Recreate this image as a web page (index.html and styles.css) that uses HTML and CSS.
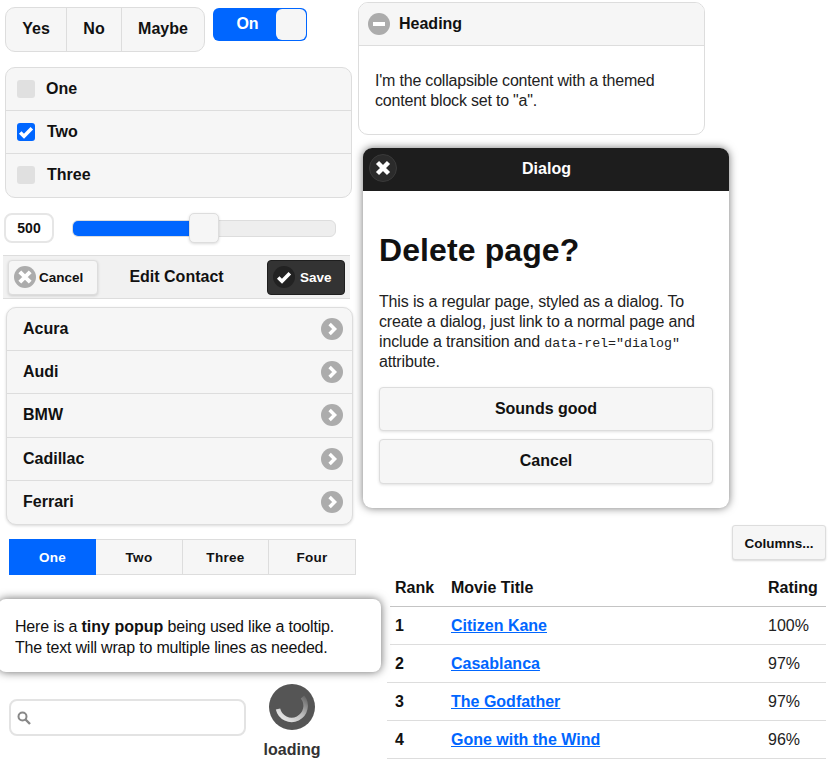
FILE: index.html
```html
<!DOCTYPE html>
<html lang="en">
<head>
  <meta charset="UTF-8">
  <title>Widgets</title>
  <link rel="stylesheet" href="styles.css">
</head>
<body>
  <div class="page">
    <div class="left-col">
      <div class="top-row">
        <div class="radio-group">
          <span class="radio-item yes">Yes</span>
          <span class="radio-item no">No</span>
          <span class="radio-item maybe">Maybe</span>
        </div>
        <div class="flip">
          <span class="flip-label">On</span>
          <span class="flip-knob"></span>
        </div>
      </div>

      <div class="check-list">
        <div class="check-row"><span class="check-box"></span><span class="check-one">One</span></div>
        <div class="check-row">
          <span class="check-box checked">
            <svg width="18" height="18" viewBox="0 0 18 18"><path d="M3.2 9.5 L7 13.2 L14.8 5.2" fill="none" stroke="#fff" stroke-width="3.6"/></svg>
          </span>
          <span>Two</span>
        </div>
        <div class="check-row"><span class="check-box"></span><span>Three</span></div>
      </div>

      <div class="slider-row">
        <div class="slider-value">500</div>
        <div class="slider-track">
          <div class="slider-fill"></div>
          <div class="slider-handle"></div>
        </div>
      </div>

      <div class="edit-bar">
        <div class="bar-btn cancel-btn">
          <span class="icon-circle">
            <svg width="22" height="22" viewBox="0 0 22 22"><path d="M5.8 5.8 L16.2 16.2 M16.2 5.8 L5.8 16.2" stroke="#fff" stroke-width="4"/></svg>
          </span>
          Cancel
        </div>
        <div class="bar-title">Edit Contact</div>
        <div class="bar-btn save-btn">
          <span class="icon-circle dark">
            <svg width="22" height="22" viewBox="0 0 22 22"><path d="M5.2 11.5 L9 15.2 L16.8 7.2" fill="none" stroke="#fff" stroke-width="3.6"/></svg>
          </span>
          Save
        </div>
      </div>

      <ul class="car-list">
        <li>Acura<span class="icon-circle"><svg width="22" height="22" viewBox="0 0 22 22"><path d="M8.6 6 L13.6 11 L8.6 16" fill="none" stroke="#fff" stroke-width="3.4"/></svg></span></li>
        <li>Audi<span class="icon-circle"><svg width="22" height="22" viewBox="0 0 22 22"><path d="M8.6 6 L13.6 11 L8.6 16" fill="none" stroke="#fff" stroke-width="3.4"/></svg></span></li>
        <li>BMW<span class="icon-circle"><svg width="22" height="22" viewBox="0 0 22 22"><path d="M8.6 6 L13.6 11 L8.6 16" fill="none" stroke="#fff" stroke-width="3.4"/></svg></span></li>
        <li>Cadillac<span class="icon-circle"><svg width="22" height="22" viewBox="0 0 22 22"><path d="M8.6 6 L13.6 11 L8.6 16" fill="none" stroke="#fff" stroke-width="3.4"/></svg></span></li>
        <li>Ferrari<span class="icon-circle"><svg width="22" height="22" viewBox="0 0 22 22"><path d="M8.6 6 L13.6 11 L8.6 16" fill="none" stroke="#fff" stroke-width="3.4"/></svg></span></li>
      </ul>

      <div class="navbar">
        <span class="nav-item active">One</span>
        <span class="nav-item two">Two</span>
        <span class="nav-item three">Three</span>
        <span class="nav-item">Four</span>
      </div>

      <div class="popup-wrap">
        <div class="popup">Here is a <strong>tiny popup</strong> being used like a tooltip.<br>The text will wrap to multiple lines as needed.</div>
      </div>

      <div class="bottom-row">
        <div class="search-box">
          <svg width="14" height="14" viewBox="0 0 14 14"><circle cx="5.5" cy="5.5" r="4" fill="none" stroke="#888" stroke-width="2"/><path d="M8.5 8.5 L13 13" stroke="#888" stroke-width="2.4"/></svg>
        </div>
        <div class="loader">
          <div class="loader-disc">
            <svg width="46" height="46" viewBox="0 0 46 46">
              <defs>
                <linearGradient id="spin" x1="0" y1="1" x2="1" y2="0">
                  <stop offset="0" stop-color="#eee"/>
                  <stop offset="0.55" stop-color="#bbb"/>
                  <stop offset="1" stop-color="#666"/>
                </linearGradient>
              </defs>
              <path d="M33.5 13 A14 14 0 1 1 9 25" fill="none" stroke="url(#spin)" stroke-width="4.5"/>
            </svg>
          </div>
          <div class="loader-text">loading</div>
        </div>
      </div>
    </div>

    <div class="right-col">
      <div class="collapsible">
        <div class="coll-head">
          <span class="icon-circle">
            <svg width="22" height="22" viewBox="0 0 22 22"><path d="M5 11 H17" stroke="#fff" stroke-width="4"/></svg>
          </span>
          Heading
        </div>
        <div class="coll-body">I'm the collapsible content with a themed content block set to "a".</div>
      </div>

      <div class="dialog">
        <div class="dialog-head">
          <span class="dialog-close">
            <svg width="28" height="28" viewBox="0 0 28 28"><path d="M8.5 8.5 L19.5 19.5 M19.5 8.5 L8.5 19.5" stroke="#fff" stroke-width="4.4"/></svg>
          </span>
          Dialog
        </div>
        <div class="dialog-body">
          <h1>Delete page?</h1>
          <p>This is a regular page, styled as a dialog. To create a dialog, just link to a normal page and include a transition and <code>data-rel="dialog"</code> attribute.</p>
          <div class="big-btn">Sounds good</div>
          <div class="big-btn last">Cancel</div>
        </div>
      </div>

      <div class="columns-row"><div class="columns-btn">Columns...</div></div>

      <table class="movies">
        <thead>
          <tr><th class="col-rank">Rank</th><th class="col-title">Movie Title</th><th>Rating</th></tr>
        </thead>
        <tbody>
          <tr><th>1</th><td><a href="#">Citizen Kane</a></td><td>100%</td></tr>
          <tr><th>2</th><td><a href="#">Casablanca</a></td><td>97%</td></tr>
          <tr><th>3</th><td><a href="#">The Godfather</a></td><td>97%</td></tr>
          <tr><th>4</th><td><a href="#">Gone with the Wind</a></td><td>96%</td></tr>
        </tbody>
      </table>
    </div>
  </div>
</body>
</html>
```

FILE: styles.css
```css
* {
  box-sizing: border-box;
}
html, body {
  height: 100%;
}
body {
  margin: 0;
  overflow: hidden;
  background: #fff;
  color: #111;
  font-family: "Liberation Sans", Arial, sans-serif;
  font-size: 16px;
}
.page {
  display: flex;
  align-items: flex-start;
}
.left-col {
  width: 358px;
  flex: none;
  font-weight: bold;
}
.right-col {
  width: 468px;
  flex: none;
}

.icon-circle {
  width: 22px;
  height: 22px;
  flex: none;
  border-radius: 50%;
  background: #acacac;
  display: block;
}
.icon-circle svg {
  display: block;
}
.icon-circle.dark {
  background: #222;
}

/* radio group + flip */
.top-row {
  display: flex;
  align-items: flex-start;
  height: 52px;
  padding: 7px 0 0 5px;
}
.radio-group {
  display: flex;
  width: 200px;
  height: 45px;
  background: #f6f6f6;
  border: 1px solid #ddd;
  border-radius: 10px;
}
.radio-item {
  display: flex;
  align-items: center;
  justify-content: center;
  padding-bottom: 1px;
  border-right: 1px solid #ddd;
}
.radio-item.yes { width: 61px; }
.radio-item.no { width: 55px; }
.radio-item.maybe { flex: 1; border-right: none; }
.flip {
  display: flex;
  align-items: center;
  width: 94px;
  height: 33px;
  margin: 1px 0 0 8px;
  background: #06f;
  border-radius: 6px;
  color: #fff;
}
.flip-label {
  flex: 1;
  text-align: center;
  padding: 0 0 2px 6px;
}
.flip-knob {
  width: 30px;
  height: 31px;
  margin-right: 1px;
  background: #f6f6f6;
  border-radius: 6px;
}

/* checkboxes */
.check-list {
  width: 347px;
  height: 131px;
  margin: 15px 0 0 5px;
  background: #f6f6f6;
  border: 1px solid #ddd;
  border-radius: 10px;
}
.check-row {
  display: flex;
  align-items: center;
  gap: 12px;
  height: 43px;
  padding-left: 11px;
  border-bottom: 1px solid #ddd;
}
.check-row:last-child {
  padding-bottom: 2px;
  border-bottom: none;
}
.check-one {
  margin-left: -1px;
}
.check-box {
  width: 18px;
  height: 18px;
  background: #e0e0e0;
  border-radius: 3px;
}
.check-box.checked {
  background: #06f;
}
.check-box svg {
  display: block;
}

/* slider */
.slider-row {
  display: flex;
  align-items: center;
  height: 32px;
  margin: 14px 0 0 4px;
}
.slider-value {
  width: 50px;
  height: 30px;
  border: 2px solid #e6e6e6;
  border-radius: 8px;
  font-size: 14px;
  line-height: 26px;
  text-align: center;
}
.slider-track {
  position: relative;
  width: 264px;
  height: 17px;
  margin-left: 18px;
  background: #eee;
  border: 1px solid #ddd;
  border-radius: 6px;
}
.slider-fill {
  width: 117px;
  height: 15px;
  background: #06f;
  border-radius: 5px 0 0 5px;
}
.slider-handle {
  position: absolute;
  left: 116px;
  top: -8px;
  width: 30px;
  height: 30px;
  background: #f6f6f6;
  border: 1px solid #ddd;
  border-radius: 5px;
  box-shadow: 0 1px 3px rgba(0, 0, 0, 0.15);
}

/* header bar */
.edit-bar {
  display: grid;
  grid-template-columns: 1fr auto 1fr;
  align-items: center;
  width: 347px;
  height: 44px;
  margin: 11px 0 0 3px;
  padding: 0 5px;
  background: #f1f1f1;
  border-top: 1px solid #ddd;
  border-bottom: 1px solid #ddd;
}
.bar-btn {
  display: flex;
  align-items: center;
  gap: 3px;
  height: 35px;
  padding-left: 5px;
  font-size: 13.5px;
  border-radius: 4px;
}
.cancel-btn {
  width: 90px;
  background: #f6f6f6;
  border: 1px solid #ddd;
  box-shadow: 0 1px 3px rgba(0, 0, 0, 0.15);
}
.save-btn {
  justify-self: end;
  width: 78px;
  gap: 5px;
  padding-left: 5px;
  background: #333;
  border: 1px solid #1f1f1f;
  color: #fff;
}
.bar-title {
  padding-bottom: 1px;
}

/* list */
.car-list {
  width: 347px;
  height: 218px;
  margin: 8px 0 0 6px;
  padding: 0;
  list-style: none;
  background: #f6f6f6;
  border: 1px solid #ddd;
  border-radius: 10px;
  box-shadow: 0 1px 3px rgba(0, 0, 0, 0.15);
}
.car-list li {
  display: flex;
  align-items: center;
  justify-content: space-between;
  height: 43.2px;
  padding: 0 9px 0 16px;
  border-bottom: 1px solid #ddd;
}
.car-list li:last-child {
  border-bottom: none;
}

/* navbar */
.navbar {
  display: flex;
  width: 347px;
  height: 36px;
  margin: 14px 0 0 9px;
  font-size: 13.5px;
  letter-spacing: 0.3px;
  background: #f6f6f6;
  border: 1px solid #ddd;
}
.nav-item {
  flex: 1;
  display: flex;
  align-items: center;
  justify-content: center;
  border-right: 1px solid #ddd;
}
.nav-item.two { flex: none; width: 87px; }
.nav-item.three { flex: none; width: 86px; }
.nav-item:last-child {
  border-right: none;
}
.nav-item.active {
  flex: none;
  width: 87px;
  margin: -1px 0 -1px -1px;
  background: #06f;
  border-right: none;
  color: #fff;
}

/* popup, white plate over the table */
.popup-wrap {
  position: relative;
  z-index: 1;
  width: 390px;
  margin-top: 16px;
  padding: 8px 9px 8px 0;
  background: #fff;
}
.popup {
  height: 73px;
  margin-left: -2px;
  padding: 17px 0 0 17px;
  background: #fff;
  border-radius: 8px;
  box-shadow: 0 0 10px rgba(0, 0, 0, 0.6);
  font-weight: normal;
  letter-spacing: -0.2px;
  line-height: 21px;
}
.popup strong {
  font-weight: bold;
  letter-spacing: 0;
}

/* search + loader */
.bottom-row {
  display: flex;
  align-items: flex-start;
  height: 86px;
  padding-left: 9px;
}
.search-box {
  display: flex;
  align-items: center;
  width: 237px;
  height: 37px;
  margin-top: 19px;
  padding-left: 6px;
  border: 2px solid #e3e3e3;
  border-radius: 8px;
}
.loader {
  width: 92px;
  padding-top: 4px;
  text-align: center;
  color: #333;
}
.loader-disc {
  width: 46px;
  height: 46px;
  margin: 0 auto;
  background: #555;
  border-radius: 50%;
}
.loader-disc svg {
  display: block;
}
.loader-text {
  margin-top: 11px;
}

/* collapsible */
.collapsible {
  width: 347px;
  height: 133px;
  margin-top: 2px;
  border: 1px solid #ddd;
  border-radius: 10px;
}
.coll-head {
  display: flex;
  align-items: center;
  gap: 9px;
  height: 43px;
  padding-left: 9px;
  background: #f6f6f6;
  border-bottom: 1px solid #ddd;
  border-radius: 9px 9px 0 0;
  font-weight: bold;
}
.coll-body {
  padding: 25px 16px 0;
  letter-spacing: -0.2px;
  line-height: 20px;
  color: #222;
}

/* dialog */
.dialog {
  width: 366px;
  height: 360px;
  margin: 13px 0 0 5px;
  background: #fff;
  border-radius: 9px;
  box-shadow: 0 0 8px rgba(0, 0, 0, 0.55);
}
.dialog-head {
  position: relative;
  height: 43px;
  padding-left: 1px;
  line-height: 41px;
  background: #1d1d1d;
  border-radius: 9px 9px 0 0;
  color: #fff;
  font-weight: bold;
  text-align: center;
}
.dialog-close {
  position: absolute;
  left: 6px;
  top: 6px;
  width: 28px;
  height: 28px;
  background: #2b2b2b;
  border: 1px solid #3a3a3a;
  border-radius: 50%;
}
.dialog-close svg {
  display: block;
  margin: -1px;
}
.dialog-body {
  padding: 41px 16px 0;
}
.dialog-body h1 {
  margin: 0;
  font-size: 32px;
  letter-spacing: 0.1px;
  line-height: 37px;
}
.dialog-body p {
  margin: 23px 0 15px;
  letter-spacing: -0.15px;
  line-height: 20px;
  color: #222;
}
.dialog-body code {
  font-family: "Liberation Mono", monospace;
  font-size: 13.3px;
  letter-spacing: 0;
  line-height: 1;
}
.big-btn {
  height: 44px;
  margin-bottom: 8px;
  background: #f6f6f6;
  border: 1px solid #ddd;
  border-radius: 4px;
  box-shadow: 0 1px 3px rgba(0, 0, 0, 0.12);
  font-weight: bold;
  line-height: 42px;
  text-align: center;
}
.big-btn.last {
  height: 45px;
}

/* columns + table */
.columns-row {
  display: flex;
  justify-content: flex-end;
  margin-top: 17px;
}
.columns-btn {
  width: 94px;
  height: 35px;
  background: #f6f6f6;
  border: 1px solid #ddd;
  border-radius: 3px;
  box-shadow: 0 1px 2px rgba(0, 0, 0, 0.15);
  font-size: 13.5px;
  font-weight: bold;
  line-height: 35px;
  text-align: center;
}
.movies {
  width: 439px;
  margin: 10px 0 0 29px;
  border-collapse: collapse;
  table-layout: fixed;
}
.movies th, .movies td {
  height: 38px;
  padding: 2px 0 0 8px;
  text-align: left;
  border-bottom: 1px solid #ddd;
}
.movies thead th {
  height: 36px;
  padding-top: 0;
  border-bottom-color: #c4c4c4;
}
.movies .col-rank {
  width: 56px;
}
.movies .col-title {
  width: 317px;
}
.movies td {
  color: #222;
}
.movies a {
  color: #06f;
  font-weight: bold;
}
```
